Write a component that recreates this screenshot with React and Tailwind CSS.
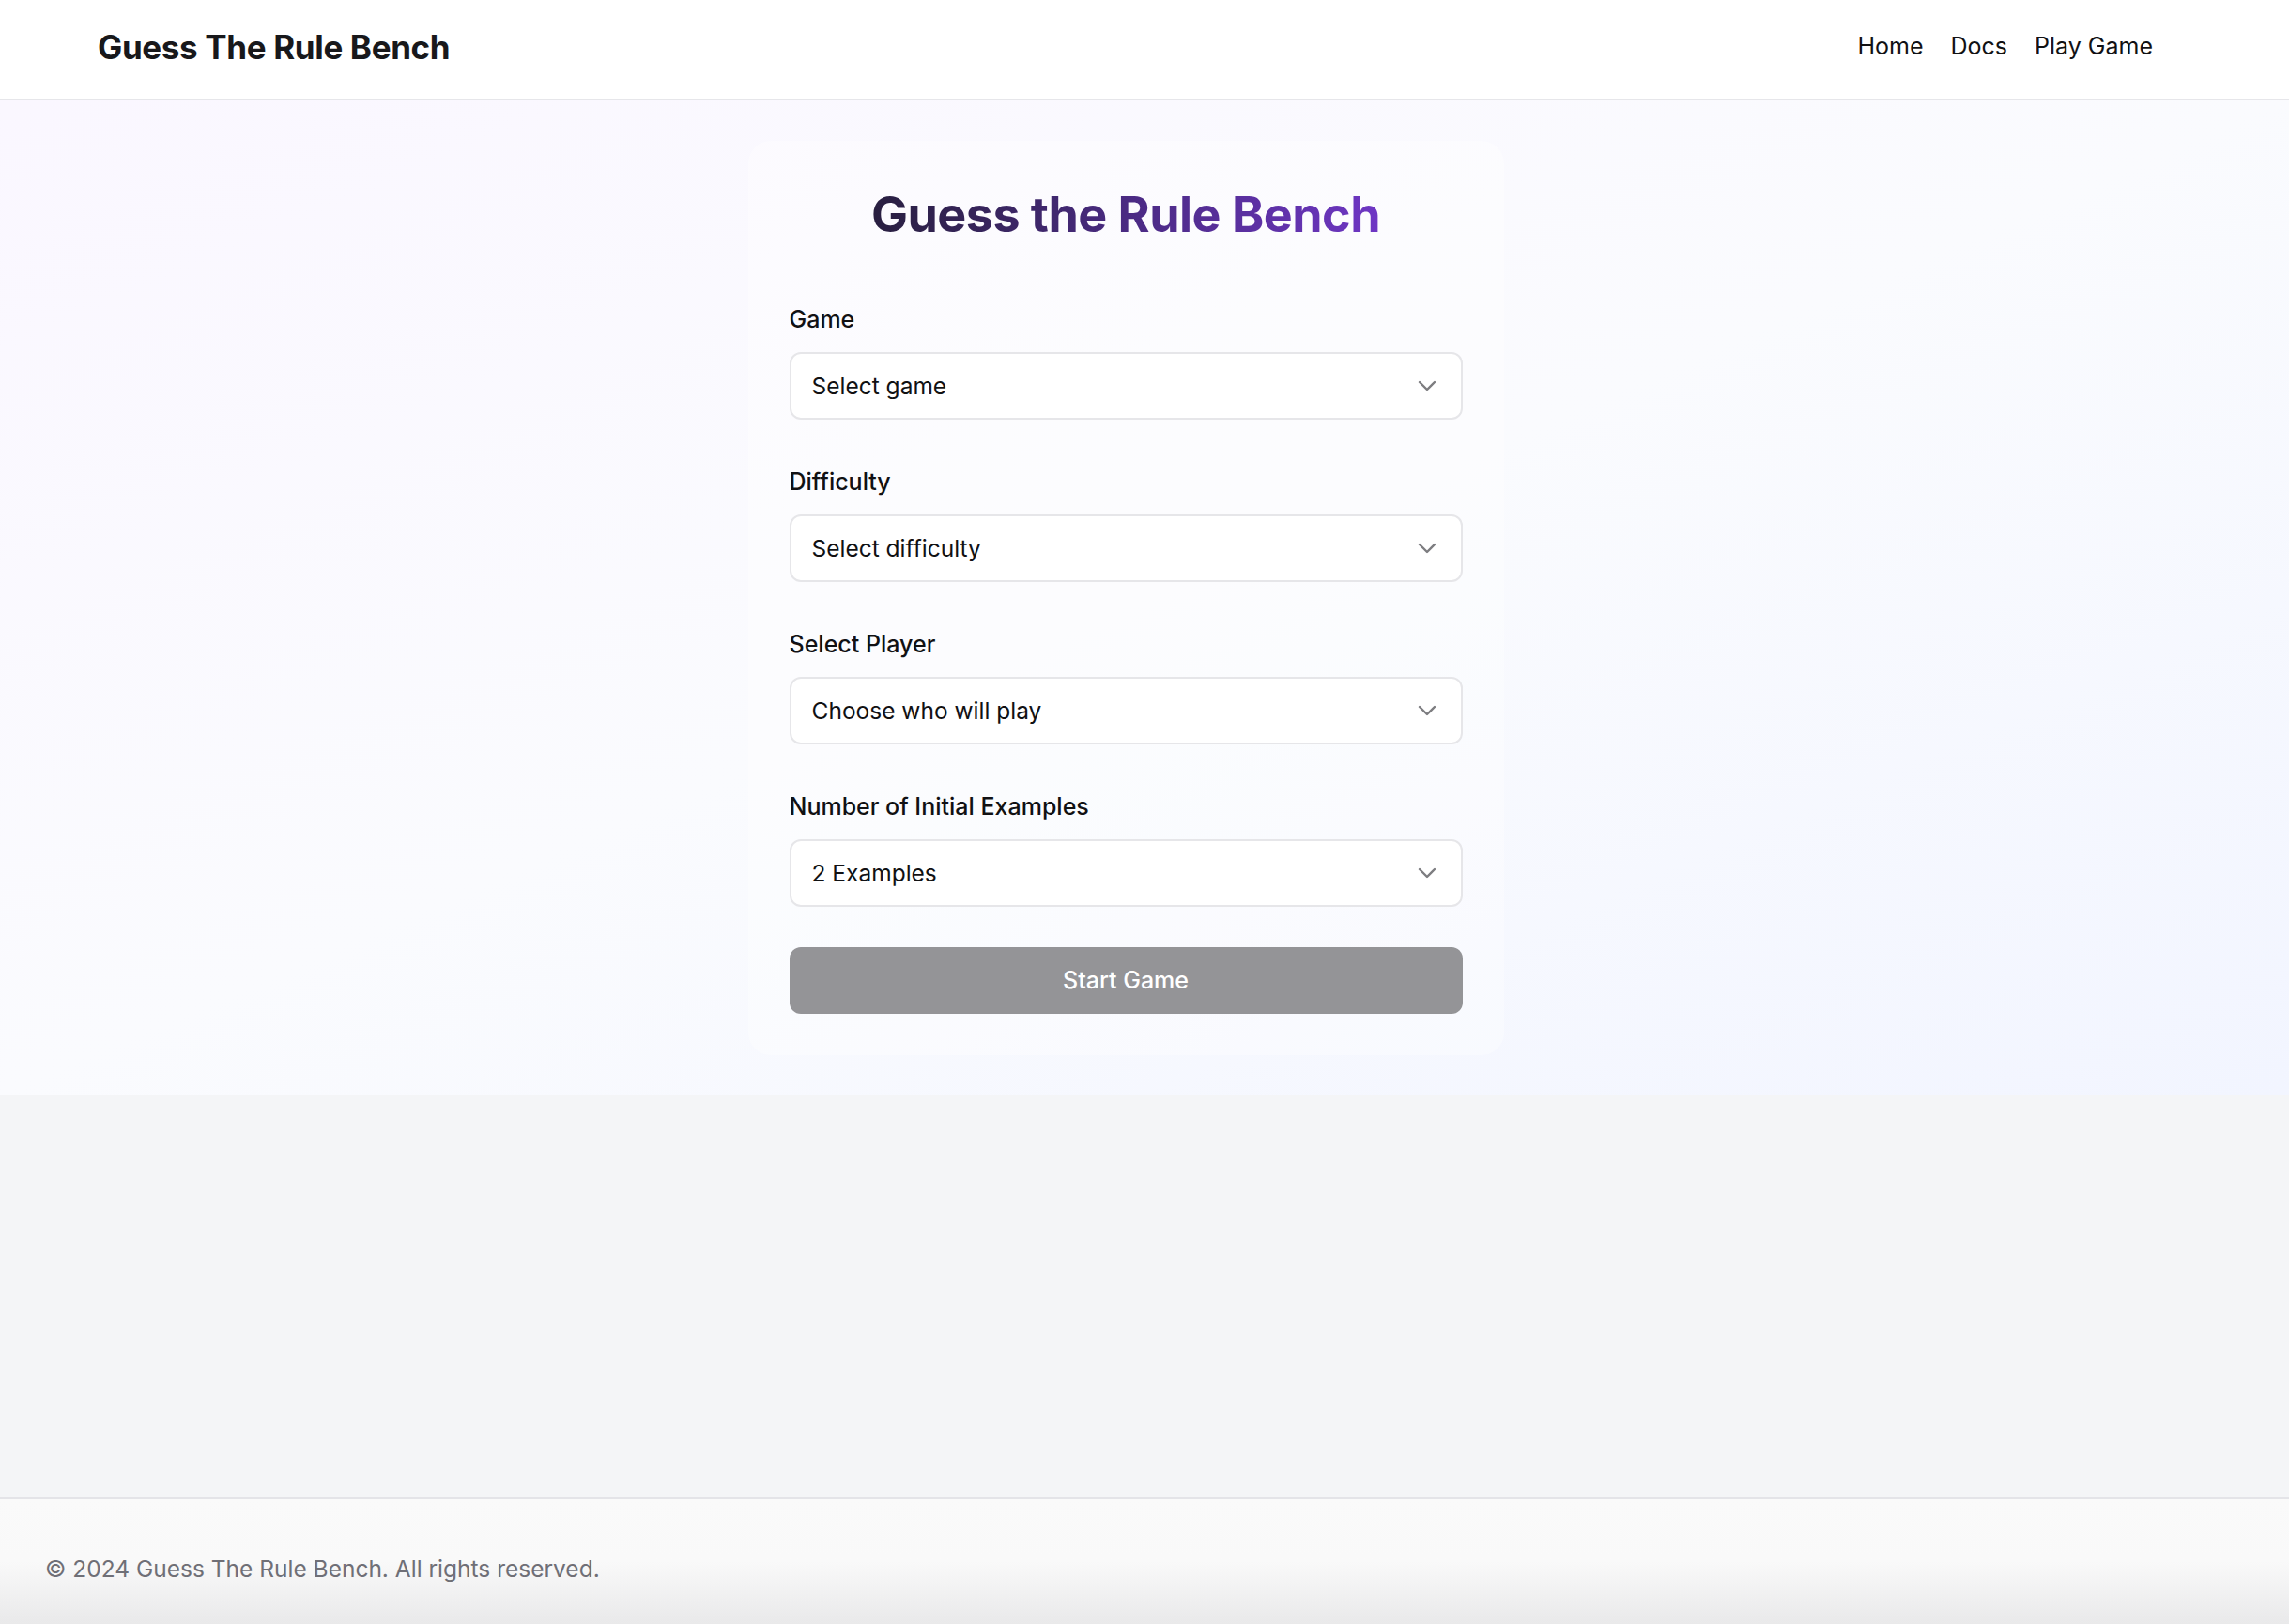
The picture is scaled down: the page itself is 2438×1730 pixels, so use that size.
import React from "react";
import { ChevronDown } from "lucide-react";

const fields = [
  { label: "Game", value: "Select game" },
  { label: "Difficulty", value: "Select difficulty" },
  { label: "Select Player", value: "Choose who will play" },
  { label: "Number of Initial Examples", value: "2 Examples" },
];

const Field = ({ label, value }) => (
  <div className="flex flex-col">
    <label className="h-[36px] leading-[36px] text-[25px] font-medium text-[#111113]">{label}</label>
    <button className="mt-[17px] h-[72px] w-full flex items-center justify-between rounded-[12px] border-2 border-[#e6e6e9] bg-white pl-[22px] pr-[20px] text-left">
      <span className="text-[24.5px] text-[#111113]">{value}</span>
      <ChevronDown size={32} strokeWidth={1.8} className="text-[#7d7d80]" />
    </button>
  </div>
);

const App = () => {
  return (
    <div className="min-h-screen flex flex-col font-['Inter',sans-serif] bg-[#f4f5f7]">
      <header className="h-[107px] bg-white border-b-2 border-[#e6e6ea]">
        <div className="h-full flex items-center justify-between pl-[104px] pr-[145px] pb-[5px]">
          <h1 className="text-[35px] font-bold tracking-[-0.01em] text-[#18181b]">Guess The Rule Bench</h1>
          <nav className="flex items-center gap-[29px] text-[25px] text-[#111113]">
            <a>Home</a>
            <a>Docs</a>
            <a>Play Game</a>
          </nav>
        </div>
      </header>

      <main className="bg-linear-to-br from-[#faf7ff] via-[#fafbfe] to-[#f2f5ff] pt-[43px] pb-[42px]">
        <div className="mr-[40px] flex justify-center">
          <div className="w-[805px] rounded-[24px] bg-white/35 px-[44px] pt-[50px] pb-[44px]">
            <h2 className="text-center text-[52px] leading-[57px] font-bold tracking-[-0.01em] bg-linear-to-r from-[#1f1a2c] via-[#4a2a82] to-[#7b3adb] bg-clip-text text-transparent">
              Guess the Rule Bench
            </h2>
            <div className="mt-[65px] flex flex-col gap-[48px]">
              {fields.map((f) => (
                <Field key={f.label} label={f.label} value={f.value} />
              ))}
            </div>
            <button className="mt-[43px] h-[71px] w-full rounded-[12px] bg-[#949497] text-[25px] font-medium text-white">
              Start Game
            </button>
          </div>
        </div>
      </main>

      <div className="flex-1" />

      <footer className="h-[135px] border-t-2 border-[#e4e4e8] bg-linear-to-b from-[#fafafa] via-[#f9f9f9] to-[#e9e9ea]">
        <div className="pl-[48px] pt-[56px] text-[24.5px] text-[#6f6f76]">
          © 2024 Guess The Rule Bench. All rights reserved.
        </div>
      </footer>
    </div>
  );
};

export default App;
